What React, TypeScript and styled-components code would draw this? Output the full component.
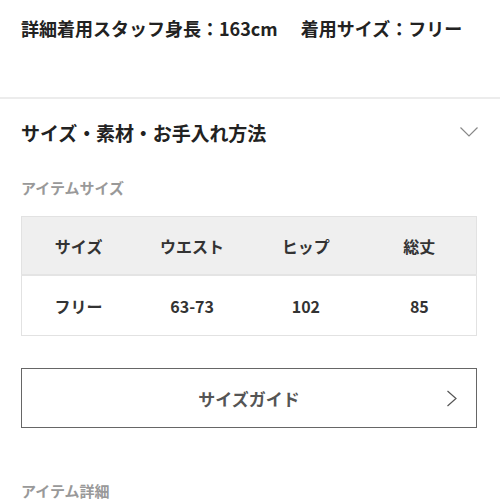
import React from "react"
import styled, { createGlobalStyle } from "styled-components"

const GlobalStyle = createGlobalStyle`
	html, body {
		margin: 0;
		padding: 0;
		background: #fff;
	}
	body {
		font-family: "Noto Sans CJK JP", "Noto Sans", sans-serif;
		color: #222;
	}
`

const PageElement = styled.div`
	width: 500px;
	height: 500px;
	overflow: hidden;
	display: flex;
	flex-direction: column;
`

const StaffNoteElement = styled.div`
	padding: 14px 21px 0;
	height: 99px;
	flex-shrink: 0;
	box-sizing: border-box;
	font-size: 18px;
	font-weight: 700;
	line-height: 28px;
	color: #222;
	white-space: nowrap;
	border-bottom: 2px solid #ececec;
`

const NoteGapElement = styled.span`
	display: inline-block;
	width: 23px;
`

const SectionElement = styled.section`
	padding: 0 21px 0 21px;
	display: flex;
	flex-direction: column;
`

const SectionHeaderElement = styled.div`
	display: flex;
	align-items: center;
	justify-content: space-between;
	height: 36px;
	margin-top: 15px;
`

const SectionTitleElement = styled.h2`
	margin: 0;
	font-size: 19px;
	font-weight: 700;
	color: #222;
	letter-spacing: -0.1px;
`

const SubHeadingElement = styled.h3<{ top: number }>`
	margin: ${props => props.top}px 0 0;
	font-size: 15px;
	line-height: 22px;
	font-weight: 700;
	color: #999;
`

const SizeTableElement = styled.table`
	margin-top: 17px;
	width: 456px;
	border-collapse: collapse;
	table-layout: fixed;
	border: 1px solid #e2e2e2;
`

const HeaderCellElement = styled.th`
	height: 57px;
	padding: 0;
	background: #efefef;
	font-size: 16px;
	font-weight: 700;
	color: #333;
	text-align: center;
	border-bottom: 2px solid #e4e4e4;
`

const BodyCellElement = styled.td`
	height: 59px;
	padding: 0;
	font-size: 16px;
	font-weight: 700;
	color: #333;
	text-align: center;
`

const GuideButtonElement = styled.button`
	margin-top: 32px;
	width: 456px;
	height: 60px;
	flex-shrink: 0;
	position: relative;
	display: flex;
	align-items: center;
	justify-content: center;
	padding: 0;
	background: #fff;
	border: 1px solid #666;
	font-family: inherit;
	font-size: 17px;
	font-weight: 700;
	color: #555;
	cursor: pointer;
`

const GuideArrowElement = styled.svg`
	position: absolute;
	right: 18px;
	top: calc(50% - 8px);
`

function ChevronDown() {
	return (
		<svg width="20" height="12" viewBox="0 0 20 12">
			<polyline points="1.5,1.5 10,10 18.5,1.5" fill="none" stroke="#888" strokeWidth="1.2" />
		</svg>
	)
}

const sizeHeaders = ["サイズ", "ウエスト", "ヒップ", "総丈"]
const sizeRows = [["フリー", "63-73", "102", "85"]]

function App() {
	return (
		<PageElement>
			<GlobalStyle />
			<StaffNoteElement>
				詳細着用スタッフ身長：163cm<NoteGapElement />着用サイズ：フリー
			</StaffNoteElement>

			<SectionElement>
				<SectionHeaderElement>
					<SectionTitleElement>サイズ・素材・お手入れ方法</SectionTitleElement>
					<ChevronDown />
				</SectionHeaderElement>

				<SubHeadingElement top={27}>アイテムサイズ</SubHeadingElement>

				<SizeTableElement>
					<thead>
						<tr>
							{sizeHeaders.map(header => <HeaderCellElement key={header}>{header}</HeaderCellElement>)}
						</tr>
					</thead>
					<tbody>
						{sizeRows.map(row => (
							<tr key={row[0]}>
								{row.map(cell => <BodyCellElement key={cell}>{cell}</BodyCellElement>)}
							</tr>
						))}
					</tbody>
				</SizeTableElement>

				<GuideButtonElement>
					サイズガイド
					<GuideArrowElement width="12" height="17" viewBox="0 0 12 17">
						<polyline points="1.5,1 10,8.5 1.5,16" fill="none" stroke="#555" strokeWidth="1.2" />
					</GuideArrowElement>
				</GuideButtonElement>

				<SubHeadingElement top={52}>アイテム詳細</SubHeadingElement>
			</SectionElement>
		</PageElement>
	)
}

export default App
